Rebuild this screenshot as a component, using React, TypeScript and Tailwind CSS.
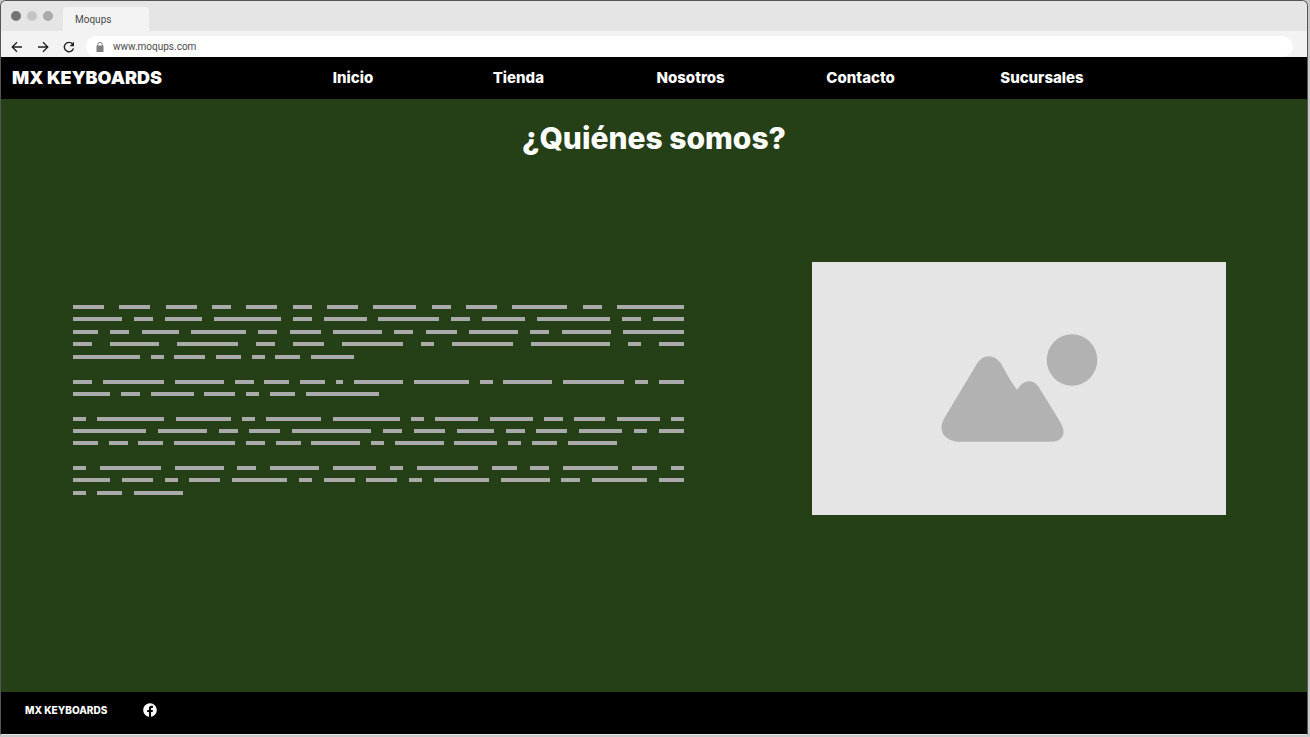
import { FaFacebook } from "react-icons/fa";

type Row = { words: number[]; width?: string };

const paragraphs: { height: string; rows: Row[] }[] = [
  {
    height: "min-h-[54px]",
    rows: [
      { words: [5, 5, 5, 3, 5, 3, 5, 7, 3, 5, 9, 3, 11] },
      { words: [8, 3, 6, 11, 3, 7, 10, 3, 7, 12, 3, 5] },
      { words: [4, 3, 6, 9, 3, 5, 8, 3, 5, 8, 3, 8, 10] },
      { words: [3, 8, 10, 3, 5, 10, 2, 10, 13, 2, 4] },
      { words: [11, 2, 5, 4, 2, 4, 7], width: "w-[46%]" },
    ],
  },
  {
    height: "min-h-[16px]",
    rows: [
      { words: [3, 10, 8, 3, 4, 4, 1, 8, 9, 2, 8, 10, 2, 4] },
      { words: [6, 3, 7, 5, 2, 4, 12], width: "w-[50%]" },
    ],
  },
  {
    height: "min-h-[28px]",
    rows: [
      { words: [2, 11, 9, 2, 9, 11, 2, 7, 7, 3, 5, 7, 2] },
      { words: [12, 8, 3, 5, 13, 3, 5, 6, 3, 5, 7, 2, 4] },
      { words: [4, 3, 4, 10, 3, 4, 8, 2, 8, 7, 2, 4, 8], width: "w-[89%]" },
    ],
  },
  {
    height: "min-h-[29px]",
    rows: [
      { words: [2, 10, 8, 3, 8, 7, 2, 10, 4, 3, 9, 4, 2] },
      { words: [6, 5, 2, 5, 9, 2, 5, 5, 2, 9, 8, 3, 9, 4] },
      { words: [2, 4, 8], width: "w-[18%]" },
    ],
  },
];

function BrowserChrome() {
  return (
    <header className="font-['Roboto',sans-serif] text-[10px] font-normal text-[#4a4a4a]">
      <div className="flex h-[30px] items-end bg-[#e5e5e5] pl-[10px]">
        <div className="mb-[10px] flex gap-[6px]">
          <span className="size-[10px] rounded-full bg-[#737373]" />
          <span className="size-[10px] rounded-full bg-[#c4c4c4]" />
          <span className="size-[10px] rounded-full bg-[#ababab]" />
        </div>
        <div className="ml-[10px] flex h-6 w-[86px] items-center rounded-t bg-[#f3f3f3] pl-3">Moqups</div>
      </div>
      <div className="flex h-[26px] items-end bg-[#f3f3f3] pr-[14px] pl-[9px]">
        <div className="mb-[3px] flex gap-3 text-[#222]">
          <button type="button" aria-label="Back">
            <svg className="size-[14px]" viewBox="0 0 14 14" fill="none" stroke="currentColor" strokeWidth="1.3">
              <path d="M12 7H2.2M7 2.2L2.2 7L7 11.8" />
            </svg>
          </button>
          <button type="button" aria-label="Forward">
            <svg className="size-[14px]" viewBox="0 0 14 14" fill="none" stroke="currentColor" strokeWidth="1.3">
              <path d="M2 7H11.8M7 2.2L11.8 7L7 11.8" />
            </svg>
          </button>
          <button type="button" aria-label="Reload">
            <svg className="size-[14px]" viewBox="0 0 14 14" fill="none" stroke="currentColor" strokeWidth="1.4">
              <path d="M10.6 4A4.7 4.7 0 1 0 11.5 8.4" />
              <path d="M12 1.8V6.2H7.6Z" fill="currentColor" stroke="none" />
            </svg>
          </button>
        </div>
        <label className="ml-[10px] flex h-[21px] flex-1 items-center gap-2 rounded-l-full rounded-r-full bg-white pl-[9px]">
          <svg className="size-[10px]" viewBox="0 0 10 10" aria-hidden="true">
            <path d="M2.8 4V2.6a2.2 2.2 0 0 1 4.4 0V4" fill="none" stroke="#808080" />
            <path d="M1.5 3.6h7V10h-7z" fill="#808080" />
          </svg>
          <input className="min-w-0 flex-1 bg-transparent outline-none" aria-label="Address" defaultValue="www.moqups.com" />
        </label>
      </div>
    </header>
  );
}

function GreekedText() {
  return (
    <div className="flex w-full flex-col gap-[21px]" role="img" aria-label="Texto">
      {paragraphs.map((paragraph, p) => (
        <div key={p} className={`flex flex-col justify-between ${paragraph.height}`}>
          {paragraph.rows.map((row, r) => (
            <div key={r} className={`flex justify-between ${row.width ?? "w-full"}`}>
              {row.words.map((letters, w) => (
                <span key={w} className="h-1 bg-[#aaaaaa]" style={{ width: letters * 6 + 1 }} />
              ))}
            </div>
          ))}
        </div>
      ))}
    </div>
  );
}

export default function App() {
  return (
    <div className="min-h-screen bg-[#c8c8c8] pr-[2px] pb-[2px] font-['Inter',sans-serif] font-extrabold text-white">
      <div className="flex min-h-[calc(100vh-2px)] flex-col overflow-hidden rounded-t-md border border-[#555] border-b-[#e5e5e5]">
        <BrowserChrome />
        <nav className="grid h-[42px] grid-cols-[321fr_160fr_164fr_170fr_174fr_307fr] items-center bg-black pl-[11px] text-[15px]">
          <a href="#" className="pb-[2px] text-[18px] font-black">MX KEYBOARDS</a>
          <a href="#inicio">Inicio</a>
          <a href="#tienda">Tienda</a>
          <a href="#nosotros">Nosotros</a>
          <a href="#contacto">Contacto</a>
          <a href="#sucursales">Sucursales</a>
        </nav>
        <main className="flex flex-1 flex-col bg-[#253f17]">
          <h1 className="pt-[19px] text-center text-[30px] leading-10">¿Quiénes somos?</h1>
          <div className="mt-[104px] grid grid-cols-[611fr_414fr] items-center gap-32 pr-[81px] pl-[72px]">
            <div className="pt-[22px]">
              <GreekedText />
            </div>
            <div className="flex h-[253px] items-center justify-center bg-[#e5e5e5]">
              <svg className="w-[157px]" viewBox="0 0 157 109" fill="#b2b2b2" role="img" aria-label="Imagen">
                <ellipse cx="131" cy="26" rx="25.3" ry="25.8" />
                <path d="M34 33C38 26 42 22.3 47.5 22.3C54 22.3 59 27 62 33C66 41 71 49 76 56C79 51 83 47.2 88 47.2C93 47.2 96 50 99 55L118 86C121 91 122.5 94 122.5 98C122.5 104 118 107.7 110 107.7H19C7 107.7 0.5 101 0.5 94C0.5 90 2 86 4 83Z" />
              </svg>
            </div>
          </div>
        </main>
        <footer className="flex h-[42px] items-start gap-9 bg-black pt-[11px] pl-6 text-[10px] leading-[14px]">
          <span>MX KEYBOARDS</span>
          <a href="#facebook" aria-label="Facebook">
            <FaFacebook className="size-[14px]" />
          </a>
        </footer>
      </div>
    </div>
  );
}
